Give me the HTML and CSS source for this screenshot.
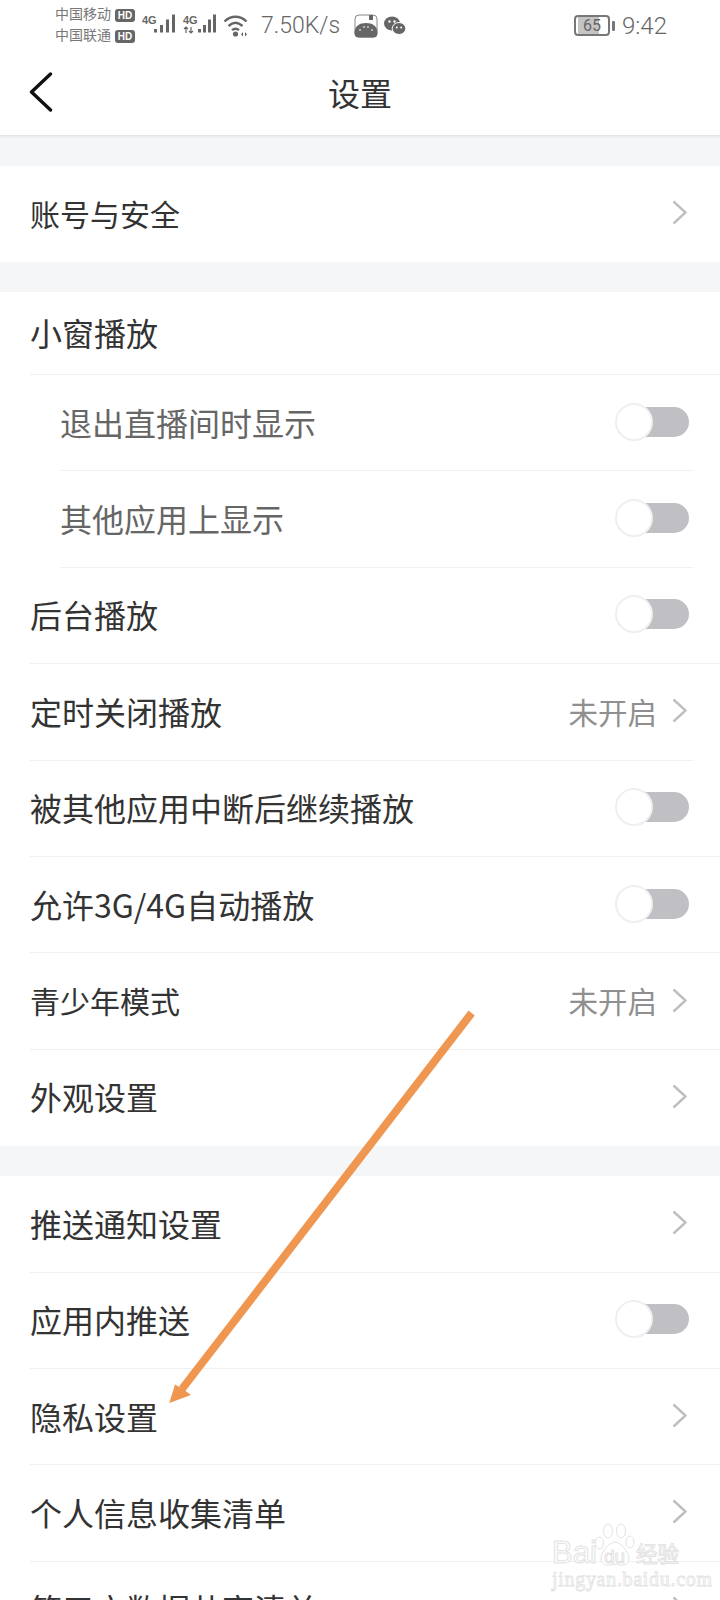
FILE: index.html
```html
<!DOCTYPE html>
<html lang="zh-CN">
<head>
  <meta charset="UTF-8">
  <meta name="viewport" content="width=device-width, initial-scale=1.0">
  <title>设置</title>
  <link rel="stylesheet" href="styles.css">
</head>
<body>
  <div class="screen">
    <header class="top">
      <!-- Status bar -->
      <div class="status-bar">
        <div class="carriers">
          <div class="carrier">中国移动<span class="hd">HD</span></div>
          <div class="carrier">中国联通<span class="hd">HD</span></div>
        </div>
        <svg class="signal" width="34" height="24" viewBox="0 0 34 24">
          <text x="0" y="11" class="net-label">4G</text>
          <rect x="12" y="16" width="3" height="3.5" />
          <rect x="18" y="12" width="3" height="7.5" />
          <rect x="24" y="6.5" width="3" height="13" />
          <rect x="30" y="1.5" width="3" height="18" />
        </svg>
        <svg class="signal signal-two" width="34" height="24" viewBox="0 0 34 24">
          <text x="0" y="11" class="net-label">4G</text>
          <path d="M3 14v6M1 16l2-2 2 2M8 14v6M6 18l2 2 2-2" class="net-arrows" />
          <rect x="15" y="16" width="3" height="3.5" />
          <rect x="20" y="12" width="3" height="7.5" />
          <rect x="25" y="6.5" width="3" height="13" />
          <rect x="30" y="1.5" width="3" height="18" />
        </svg>
        <svg class="wifi" width="26" height="24" viewBox="0 0 26 24">
          <path d="M1.5 7.5C8 1.2 17 1.2 23.5 7.5M5.5 12C10 7.8 15 7.8 19.5 12M9 16.2c2.4-2 4.6-2 7 0" />
          <circle cx="12.5" cy="20" r="2.6" />
          <path d="M20 18l-2 2.2 2 2.2zM22 18l2 2.2-2 2.2z" class="wifi-arrows" />
        </svg>
        <span class="speed">7.50K/s</span>
        <svg class="app-icon" width="24" height="24" viewBox="0 0 24 24">
          <rect x="1" y="1" width="22" height="22" rx="4" class="app-frame" />
          <path d="M0.5 19C0.5 12 5.5 9 12 9s11.5 3 11.5 10c0 3-1.5 4.5-4 4.5H4.5c-2.5 0-4-1.5-4-4.5z" />
          <rect x="15" y="1" width="4" height="5" />
          <circle cx="6" cy="16" r="1" class="app-dot" />
          <circle cx="10" cy="13" r="1" class="app-dot" />
          <circle cx="14" cy="13" r="1" class="app-dot" />
          <circle cx="18" cy="16" r="1" class="app-dot" />
        </svg>
        <svg class="wechat" width="22" height="20" viewBox="0 0 22 20">
          <ellipse cx="8" cy="7.5" rx="8" ry="7" />
          <ellipse cx="15" cy="12.5" rx="6.8" ry="6" class="wechat-front" />
          <circle cx="5.5" cy="5.5" r="1.2" class="wechat-eye" />
          <circle cx="10.5" cy="5.5" r="1.2" class="wechat-eye" />
          <circle cx="12.8" cy="11.5" r="1" class="wechat-eye" />
          <circle cx="17.2" cy="11.5" r="1" class="wechat-eye" />
        </svg>
        <div class="status-right">
          <div class="battery">
            <div class="battery-body"><div class="battery-fill"></div><span class="battery-num">65</span></div>
            <div class="battery-nub"></div>
          </div>
          <span class="clock">9:42</span>
        </div>
      </div>

      <!-- Nav -->
      <div class="nav">
        <svg class="back" width="24" height="40" viewBox="0 0 24 40">
          <path d="M21.5 2L2.5 20l19 18" />
        </svg>
        <h1>设置</h1>
      </div>
    </header>

    <section class="group">
      <div class="row row-first"><span class="label label-small">账号与安全</span><svg class="chevron" width="15" height="25" viewBox="0 0 15 25"><path d="M1.5 1.5l12 11-12 11" /></svg></div>
    </section>

    <section class="group">
      <div class="row row-head line"><span class="label">小窗播放</span></div>
      <div class="row sub"><span class="label">退出直播间时显示</span><div class="toggle"><div class="knob"></div></div></div>
      <div class="row sub"><span class="label">其他应用上显示</span><div class="toggle"><div class="knob"></div></div></div>
      <div class="row line"><span class="label">后台播放</span><div class="toggle"><div class="knob"></div></div></div>
      <div class="row line-short"><span class="label">定时关闭播放</span><span class="value">未开启</span><svg class="chevron" width="15" height="25" viewBox="0 0 15 25"><path d="M1.5 1.5l12 11-12 11" /></svg></div>
      <div class="row line"><span class="label">被其他应用中断后继续播放</span><div class="toggle"><div class="knob"></div></div></div>
      <div class="row line"><span class="label">允许3G/4G自动播放</span><div class="toggle"><div class="knob"></div></div></div>
      <div class="row line"><span class="label label-small">青少年模式</span><span class="value">未开启</span><svg class="chevron" width="15" height="25" viewBox="0 0 15 25"><path d="M1.5 1.5l12 11-12 11" /></svg></div>
      <div class="row"><span class="label">外观设置</span><svg class="chevron" width="15" height="25" viewBox="0 0 15 25"><path d="M1.5 1.5l12 11-12 11" /></svg></div>
    </section>

    <section class="group">
      <div class="row line"><span class="label">推送通知设置</span><svg class="chevron" width="15" height="25" viewBox="0 0 15 25"><path d="M1.5 1.5l12 11-12 11" /></svg></div>
      <div class="row line"><span class="label">应用内推送</span><div class="toggle"><div class="knob"></div></div></div>
      <div class="row line"><span class="label">隐私设置</span><svg class="chevron" width="15" height="25" viewBox="0 0 15 25"><path d="M1.5 1.5l12 11-12 11" /></svg></div>
      <div class="row line"><span class="label">个人信息收集清单</span><svg class="chevron" width="15" height="25" viewBox="0 0 15 25"><path d="M1.5 1.5l12 11-12 11" /></svg></div>
      <div class="row"><span class="label">第三方数据共享清单</span><svg class="chevron" width="15" height="25" viewBox="0 0 15 25"><path d="M1.5 1.5l12 11-12 11" /></svg></div>
    </section>

    <!-- Annotation drawn over the screenshot -->
    <svg class="arrow" width="720" height="1600" viewBox="0 0 720 1600">
      <path d="M468.6 1010.5L474.8 1015.5L185 1391.500L179 1386.500z" />
      <path d="M169.3 1403L175 1384.5L182 1388.5L191 1395z" />
    </svg>

    <!-- Watermark -->
    <div class="watermark">
      <div class="wm-logo">
        <span class="wm-bai">Bai</span>
        <svg class="wm-paw" width="40" height="46" viewBox="0 0 40 46">
          <ellipse cx="4.5" cy="21" rx="4" ry="6" />
          <ellipse cx="13" cy="9" rx="4.5" ry="7" />
          <ellipse cx="26" cy="9" rx="4.5" ry="7" />
          <ellipse cx="35" cy="20" rx="4" ry="6" />
          <path d="M20 20c6 0 14 10 14 17 0 5-5 7-9 6-3-1-7-1-10 0-4 1-9-1-9-6 0-7 8-17 14-17z" />
        </svg>
        <span class="wm-du">du</span>
        <span class="wm-cn">经验</span>
      </div>
      <div class="wm-url">jingyan.baidu.com</div>
    </div>
  </div>
</body>
</html>
```

FILE: styles.css
```css
/* General Styles */
body {
  margin: 0;
  padding: 0;
  background: #f5f6f8;
  font-family: 'Noto Sans CJK SC', 'Noto Sans', sans-serif;
  color: #333;
}

.screen {
  position: relative;
  width: 720px;
  height: 1600px;
  overflow: hidden;
}

/* Header */
.top {
  height: 135px;
  background: #fff;
  border-bottom: 1px solid #e4e4e4;
  box-shadow: 0 1px 3px rgba(0, 0, 0, 0.06);
  position: relative;
}

.status-bar {
  box-sizing: border-box;
  height: 48px;
  display: flex;
  align-items: center;
  padding: 3px 53px 0 55px;
  color: #666;
}

.carriers {
  width: 87px;
  flex: none;
  margin-top: -3px;
}

.carrier {
  font-size: 14px;
  line-height: 21px;
  white-space: nowrap;
  color: #777;
}

.hd {
  display: inline-block;
  width: 20px;
  height: 13px;
  margin-left: 4px;
  border-radius: 3px;
  background: #666;
  color: #fff;
  font-family: 'Liberation Sans', sans-serif;
  font-size: 10px;
  font-weight: bold;
  line-height: 13px;
  text-align: center;
}

.signal {
  flex: none;
  fill: #666;
  margin-top: -1px;
}

.signal-two {
  margin-left: 7px;
}

.net-label {
  font-family: 'Liberation Sans', sans-serif;
  font-size: 11px;
  font-weight: bold;
  fill: #666;
}

.net-arrows {
  fill: none;
  stroke: #666;
  stroke-width: 1.2;
}

.wifi {
  flex: none;
  margin-left: 6px;
  fill: none;
  stroke: #666;
  stroke-width: 2.4;
}

.wifi circle,
.wifi-arrows {
  fill: #666;
  stroke: none;
}

.speed {
  margin-left: 12px;
  font-family: Roboto, sans-serif;
  font-size: 23px;
  font-weight: 300;
  color: #666;
  white-space: nowrap;
}

.app-icon {
  flex: none;
  margin-left: 14px;
  fill: #666;
}

.app-frame {
  fill: none;
  stroke: #888;
  stroke-width: 1;
}

.app-dot {
  fill: #ccc;
}

.wechat {
  flex: none;
  margin-left: 6px;
  fill: #666;
}

.wechat-front {
  stroke: #fff;
  stroke-width: 1;
}

.wechat-eye {
  fill: #fff;
}

.status-right {
  margin-left: auto;
  display: flex;
  align-items: center;
}

.battery {
  display: flex;
  align-items: center;
  gap: 2px;
}

.battery-body {
  position: relative;
  box-sizing: border-box;
  width: 36px;
  height: 21px;
  border: 2px solid #777;
  border-radius: 4px;
}

.battery-fill {
  width: 65%;
  height: 100%;
  margin-left: 2px;
  background: #c4c4c4;
}

.battery-num {
  position: absolute;
  top: 0;
  left: 0;
  width: 100%;
  text-align: center;
  font-family: Roboto, sans-serif;
  font-size: 16px;
  line-height: 17px;
  color: #666;
}

.battery-nub {
  width: 3px;
  height: 10px;
  border-radius: 1px;
  background: #777;
}

.clock {
  margin-left: 7px;
  font-family: Roboto, sans-serif;
  font-size: 24px;
  font-weight: 300;
  color: #666;
}

/* Nav */
.nav {
  position: relative;
  height: 87px;
  display: flex;
  align-items: center;
  justify-content: center;
}

.nav h1 {
  margin: 0;
  font-size: 32px;
  font-weight: 400;
  line-height: 40px;
  color: #333;
}

.back {
  position: absolute;
  left: 29px;
  top: 24px;
  fill: none;
  stroke: #111;
  stroke-width: 3.4;
  stroke-linecap: round;
  stroke-linejoin: round;
}

/* Settings list */
.group {
  margin-top: 30px;
  background: #fff;
}

.row {
  box-sizing: border-box;
  height: 96.4px;
  display: flex;
  align-items: center;
  padding: 0 33px 3px 30px;
  position: relative;
}

.row-first {
  height: 96px;
}

.row-head {
  height: 83px;
}

.line::after,
.line-short::after,
.sub::after {
  content: '';
  position: absolute;
  left: 30px;
  right: 0;
  bottom: 0;
  height: 1px;
  background: #f0f0f0;
}

.line-short::after {
  right: 27px;
}

.sub {
  padding-left: 60px;
}

.sub::after {
  left: 60px;
  right: 27px;
}

.sub .label {
  color: #666;
}

.label {
  font-size: 32px;
  line-height: 44px;
  color: #333;
  white-space: nowrap;
}

.label-small {
  font-size: 30px;
}

.value {
  margin-left: auto;
  font-size: 29.5px;
  line-height: 44px;
  color: #8f8f8f;
}

.chevron {
  flex: none;
  margin-left: auto;
  fill: none;
  stroke: #bfbfbf;
  stroke-width: 2.4;
}

.value + .chevron {
  margin-left: 15px;
}

/* Toggle */
.toggle {
  position: relative;
  width: 74px;
  height: 30px;
  margin-left: auto;
  margin-right: -2px;
}

.toggle::before {
  content: '';
  position: absolute;
  left: 15px;
  right: 0;
  top: 0;
  bottom: 0;
  border-radius: 15px;
  background: #c0bfc3;
}

.knob {
  position: absolute;
  left: 0;
  top: -4px;
  box-sizing: border-box;
  width: 38px;
  height: 38px;
  border-radius: 50%;
  background: #fff;
  border: 2px solid #efefef;
}

/* Arrow annotation */
.arrow {
  position: absolute;
  left: 0;
  top: 0;
  fill: #ef9650;
  pointer-events: none;
}

/* Watermark */
.watermark {
  position: absolute;
  left: 552px;
  top: 1522px;
  width: 150px;
  color: #fff;
  opacity: 0.9;
}

.wm-logo {
  position: relative;
  height: 46px;
  font-family: 'Liberation Sans', sans-serif;
  -webkit-text-stroke: 1px #e0e0e0;
}

.wm-bai {
  position: absolute;
  left: 0;
  top: 13px;
  font-size: 31px;
  line-height: 36px;
}

.wm-paw {
  position: absolute;
  left: 43px;
  top: 0;
  fill: #fff;
  stroke: #e0e0e0;
  stroke-width: 1;
}

.wm-du {
  position: absolute;
  left: 52px;
  top: 25px;
  font-size: 19px;
  line-height: 20px;
}

.wm-cn {
  position: absolute;
  left: 84px;
  top: 17px;
  font-family: 'Noto Sans CJK SC', sans-serif;
  font-size: 21.5px;
  line-height: 28px;
  white-space: nowrap;
}

.wm-url {
  margin-top: 1px;
  font-family: 'Liberation Serif', serif;
  font-size: 20px;
  line-height: 20px;
  letter-spacing: 0.7px;
  -webkit-text-stroke: 0.8px #e0e0e0;
  white-space: nowrap;
}
```
